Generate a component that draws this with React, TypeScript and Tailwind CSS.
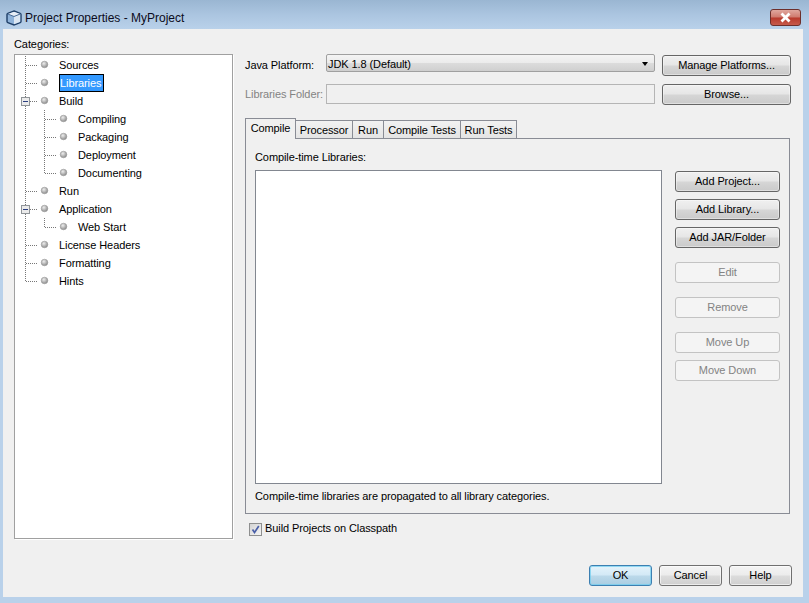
import React from "react"

type RowProps = {
  label: string
  depth?: number
  expander?: boolean
  selected?: boolean
  lastChild?: boolean
  childLine?: boolean
  rootLine?: "full" | "end" | "none"
}

const rows: RowProps[] = [
  { label: "Sources", rootLine: "full" },
  { label: "Libraries", selected: true, rootLine: "full" },
  { label: "Build", expander: true, rootLine: "full" },
  { label: "Compiling", depth: 1, rootLine: "full", childLine: true },
  { label: "Packaging", depth: 1, rootLine: "full", childLine: true },
  { label: "Deployment", depth: 1, rootLine: "full", childLine: true },
  { label: "Documenting", depth: 1, rootLine: "full", childLine: true, lastChild: true },
  { label: "Run", rootLine: "full" },
  { label: "Application", expander: true, rootLine: "full" },
  { label: "Web Start", depth: 1, rootLine: "full", childLine: true, lastChild: true },
  { label: "License Headers", rootLine: "full" },
  { label: "Formatting", rootLine: "full" },
  { label: "Hints", rootLine: "end" },
]

const TreeRow = ({ label, depth = 0, expander, selected, lastChild, childLine, rootLine }: RowProps) => {
  const bulletX = depth ? 48.5 : 29.5
  return (
    <div className="flex h-[18px] items-center">
      <svg width="44" height="18" viewBox="0 0 44 18" className="shrink-0 overflow-visible">
        <line x1="10.5" y1="0" x2="10.5" y2={rootLine === "end" ? 9 : 18} stroke="#777" strokeDasharray="1 1" />
        {depth === 0 && <line x1="11" y1="9.5" x2="22" y2="9.5" stroke="#777" strokeDasharray="1 1" />}
        {childLine && (
          <>
            <line x1="29.5" y1="0" x2="29.5" y2={lastChild ? 9 : 18} stroke="#777" strokeDasharray="1 1" />
            <line x1="30" y1="9.5" x2="41" y2="9.5" stroke="#777" strokeDasharray="1 1" />
          </>
        )}
        {expander && (
          <>
            <rect x="6.5" y="5.5" width="8" height="8" fill="#ebebeb" stroke="#8f9498" />
            <line x1="8" y1="9.5" x2="13" y2="9.5" stroke="#2b3f80" />
          </>
        )}
        <defs>
          <radialGradient id="ball" cx="0.4" cy="0.35" r="0.75">
            <stop offset="0" stopColor="#eeeeee" />
            <stop offset="1" stopColor="#7c7c7c" />
          </radialGradient>
        </defs>
        <circle cx={bulletX} cy="8.5" r="3.3" fill="url(#ball)" stroke="#999" strokeWidth="0.6" />
      </svg>
      <span
        className={
          selected
            ? "flex h-[18px] items-center border border-black bg-[#3399ff] pr-[2px] text-white"
            : depth
              ? "ml-[19px]"
              : ""
        }
      >
        {label}
      </span>
    </div>
  )
}

const normalBtn =
  "rounded-[3px] border border-[#707070] bg-[linear-gradient(180deg,#f4f4f4_0%,#ececec_48%,#dcdcdc_52%,#cfcfcf_100%)] shadow-[inset_0_0_0_1px_rgba(255,255,255,0.6)] text-black"
const strongBtn =
  "rounded-[3px] border border-[#666666] bg-[linear-gradient(180deg,#f0f0f0_0%,#e6e6e6_48%,#d6d6d6_52%,#cacaca_100%)] shadow-[inset_0_0_0_1px_rgba(255,255,255,0.4)] text-black"
const disabledBtn = "rounded-[3px] border border-[#c3c3c3] bg-[#f4f4f4] text-[#838383]"

const Btn = ({ children, width, disabled, focused, strong }: { children: React.ReactNode; width: string; disabled?: boolean; focused?: boolean; strong?: boolean }) => (
  <button
    className={`${width} flex h-[21px] shrink-0 items-center justify-center ${
      disabled
        ? disabledBtn
        : focused
          ? "rounded-[3px] border border-[#3c7fb1] bg-[linear-gradient(180deg,#e4f3fb_0%,#d3e9f6_48%,#bcd9ea_52%,#a9cde2_100%)] shadow-[inset_0_0_0_1px_rgba(110,205,240,0.7)] text-black"
          : strong
            ? strongBtn
            : normalBtn
    }`}
  >
    {children}
  </button>
)

const tabs = [
  { label: "Processor", width: "w-[57px]" },
  { label: "Run", width: "w-[31px]" },
  { label: "Compile Tests", width: "w-[77px]" },
  { label: "Run Tests", width: "w-[56px]" },
]

const App = () => {
  return (
    <div className="h-[603px] w-[809px] overflow-hidden bg-[#b9d1ea] font-['Liberation_Sans',sans-serif] text-[11px] leading-none tracking-[-0.09px] text-black">
      <div className="flex h-[29px] items-center bg-[linear-gradient(180deg,#9ab6d2_0%,#abc5e0_50%,#b9d1ea_100%)] pl-[6px] pr-[8px] pt-[6px]">
        <svg width="16" height="16" viewBox="0 0 16 16" className="shrink-0">
          <path d="M8 1 14.200 3.400c.5.2.8.6.8 1.100v7c0 .5-.3.9-.8 1.100L8 15l-6.200-2.400c-.5-.2-.8-.6-.8-1.100v-7c0-.5.3-.9.8-1.100z" fill="#8fb3da" stroke="#1f3f68" strokeWidth="1.400" />
          <path d="M2 4 8 1.700 14 4 8 6.500z" fill="#e8eef6" />
          <path d="M8 6.500 14.200 4v7.500c0 .3-.2.5-.4.6L8 14.300z" fill="#dbe6f2" />
          <path d="M1.800 4 8 6.500 14.200 4" fill="none" stroke="#4a6c96" />
        </svg>
        <span className="ml-[3px] text-[12px] tracking-normal text-[#0b0b20]">Project Properties - MyProject</span>
        <div className="ml-auto flex h-[17px] w-[31px] items-center justify-center rounded-[3px] border border-[#6d2f2b] bg-[linear-gradient(180deg,#e0a79e_0%,#cf7a6e_48%,#b8392c_52%,#c65a4b_100%)]">
          <svg width="13" height="11" viewBox="0 0 13 11">
            <path d="M2.500 1.500 10.500 9.500M10.500 1.500 2.500 9.500" fill="none" stroke="#fff" strokeWidth="2.800" />
          </svg>
        </div>
      </div>

      <div className="ml-[3px] flex h-[568px] w-[800px] flex-col bg-[#f0f0f0]">
        <div className="flex h-[536px] pl-[11px]">
          <div className="w-[219px]">
            <div className="flex h-[25px] items-center pt-[5px]">Categories:</div>
            <div className="h-[485px] border border-[#a0a0a0] bg-white pt-[1px] shadow-[1px_1px_0_#fff]">
              {rows.map((r) => (
                <TreeRow key={r.label} {...r} />
              ))}
            </div>
          </div>

          <div className="ml-[12px] w-[546px] pt-[25px]">
            <div className="flex h-[30px] items-start">
              <span className="mt-[6px] w-[81px] whitespace-nowrap">Java Platform:</span>
              <div className="flex h-[18px] w-[329px] items-center justify-between rounded-[2px] border border-[#a0a0a0] bg-[linear-gradient(180deg,#f4f4f4_0%,#ebebeb_50%,#dcdcdc_50%,#cfcfcf_100%)] pl-[1px] pr-[6px]">
                <span className="pt-[2px]">JDK 1.8 (Default)</span>
                <span className="mt-[2px] h-0 w-0 border-x-[3.5px] border-t-[4px] border-x-transparent border-t-black" />
              </div>
              <div className="ml-[7px] mt-[1px]">
                <Btn width="w-[129px]" strong>Manage Platforms...</Btn>
              </div>
            </div>
            <div className="flex h-[34px] items-start">
              <span className="mt-[5px] w-[81px] whitespace-nowrap text-[#838383]">Libraries Folder:</span>
              <div className="h-[20px] w-[329px] border border-[#b5b5b5] bg-[#f0f0f0]" />
              <div className="ml-[7px]">
                <Btn width="w-[129px]" strong>Browse...</Btn>
              </div>
            </div>

            <div className="flex h-[20px] items-end">
              <div className="relative z-10 -mb-[1px] flex h-[21px] w-[51px] items-center justify-center border border-b-0 border-[#898c95] bg-[#f0f0f0] pb-[1px]">
                Compile
              </div>
              {tabs.map((t) => (
                <div
                  key={t.label}
                  className={`${t.width} flex h-[18px] items-center justify-center border border-l-0 border-b-0 border-[#898c95] bg-[linear-gradient(180deg,#f2f2f2_0%,#e4e4e4_100%)] pt-[1px]`}
                >
                  {t.label}
                </div>
              ))}
            </div>

            <div className="h-[376px] w-[545px] border border-[#898c95] pl-[9px] pt-[12px]">
              <div className="flex h-[19px] items-start pt-[1px]">Compile-time Libraries:</div>
              <div className="flex h-[321px]">
                <div className="h-[314px] w-[407px] border border-[#828790] bg-white" />
                <div className="ml-[13px] mt-[1px] flex w-[105px] flex-col">
                  <Btn width="w-[105px]" strong>Add Project...</Btn>
                  <div className="h-[7px] shrink-0" />
                  <Btn width="w-[105px]" strong>Add Library...</Btn>
                  <div className="h-[7px] shrink-0" />
                  <Btn width="w-[105px]" strong>Add JAR/Folder</Btn>
                  <div className="h-[14px] shrink-0" />
                  <Btn width="w-[105px]" disabled>Edit</Btn>
                  <div className="h-[14px] shrink-0" />
                  <Btn width="w-[105px]" disabled>Remove</Btn>
                  <div className="h-[14px] shrink-0" />
                  <Btn width="w-[105px]" disabled>Move Up</Btn>
                  <div className="h-[7px] shrink-0" />
                  <Btn width="w-[105px]" disabled>Move Down</Btn>
                </div>
              </div>
              <div>Compile-time libraries are propagated to all library categories.</div>
            </div>

            <div className="ml-[4px] mt-[8px] flex h-[14px] items-center">
              <div className="flex h-[13px] w-[13px] items-center justify-center border border-[#8e8f8f] bg-[linear-gradient(135deg,#d4d4d4_0%,#f4f4f4_100%)]">
                <svg width="9" height="9" viewBox="0 0 9 9">
                  <path d="M1.500 4.500 3.500 7.500 7.800 1" fill="none" stroke="#4a5fa8" strokeWidth="1.700" />
                </svg>
              </div>
              <span className="ml-[3px] -mt-[1px]">Build Projects on Classpath</span>
            </div>
          </div>
        </div>

        <div className="flex justify-end gap-[7px] pr-[11px]">
          <Btn width="w-[63px]" focused>OK</Btn>
          <Btn width="w-[63px]">Cancel</Btn>
          <Btn width="w-[63px]">Help</Btn>
        </div>
      </div>
    </div>
  )
}

export default App
